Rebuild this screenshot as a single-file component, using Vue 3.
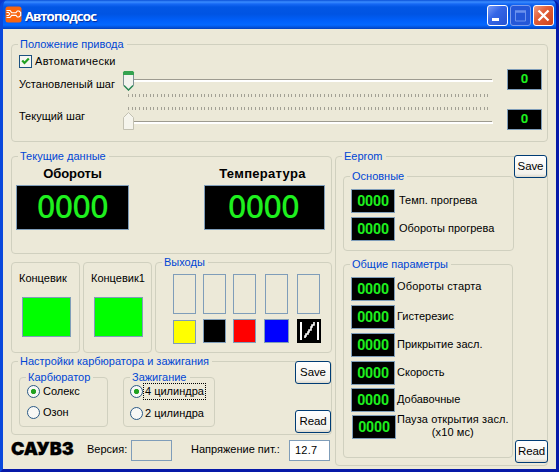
<script setup>
const ticks = Array.from({ length: 100 }, (_, i) => 13.5 + Math.round(i * 3.63))
const outputs = ['yellow', 'black', 'red', 'blue', 'coil']
const params = [
  { id: 'start', text: 'Обороты старта' },
  { id: 'hyst', text: 'Гистерезис' },
  { id: 'cover', text: 'Прикрытие засл.' },
  { id: 'speed', text: 'Скорость' },
  { id: 'extra', text: 'Добавочные' },
]
</script>

<template>
  <div class="window">
    <header class="titlebar">
      <svg class="app-icon" width="17" height="17" viewBox="0 0 17 17">
        <rect x=".5" y=".5" width="16" height="16" rx="2.5" fill="#f9650f" />
        <path d="M1.500 4.500h3.500l1.700 2.200h4.300l1.300-1.700h1.700l1.700 1.500v3l-1.700 1.500h-1.700l-1.300-1.600h-4.300L5 11.500H1.500M1.500 6.500h2l1.200 1.500-1.200 1.500h-2" fill="none" stroke="#fff" stroke-width="1.100" />
      </svg>
      <h1>Автоподсос</h1>
      <div class="controls">
        <svg width="21" height="21" viewBox="0 0 21 21">
          <defs>
            <linearGradient id="blueBtn" x1="0" y1="0" x2="1" y2="1"><stop offset="0" stop-color="#7d9ff8" /><stop offset=".4" stop-color="#3566e6" /><stop offset="1" stop-color="#2553d2" /></linearGradient>
            <linearGradient id="redBtn" x1="0" y1="0" x2="1" y2="1"><stop offset="0" stop-color="#f0a088" /><stop offset=".4" stop-color="#e2603a" /><stop offset="1" stop-color="#cc4119" /></linearGradient>
          </defs>
          <rect x=".5" y=".5" width="20" height="20" rx="2.500" fill="url(#blueBtn)" stroke="#fff" />
          <rect x="5" y="13" width="7" height="3" fill="#fff" />
        </svg>
        <svg width="21" height="21" viewBox="0 0 21 21">
          <rect x=".5" y=".5" width="20" height="20" rx="2.500" fill="#2457d8" stroke="#7c9cec" />
          <path d="M5.500 6v10h10V6M5 6.500h11" fill="none" stroke="#6c92ee" />
          <path d="M5 6.500h11" stroke="#6c92ee" stroke-width="2.500" />
        </svg>
        <svg width="21" height="21" viewBox="0 0 21 21">
          <rect x=".5" y=".5" width="20" height="20" rx="2.500" fill="url(#redBtn)" stroke="#fff" />
          <path d="M5.500 5.500l10 10M15.500 5.500l-10 10" stroke="#fff" stroke-width="2.300" />
        </svg>
      </div>
    </header>

    <main class="client">
      <section class="group drive">
        <div class="legend"><span>Положение привода</span></div>
        <div class="drive-body">
          <div class="drive-labels">
            <label class="auto">
              <svg width="13" height="13" viewBox="0 0 13 13">
                <rect x=".5" y=".5" width="12" height="12" fill="#f6f6f2" stroke="#1c5180" />
                <path d="M3.200 5.500l2.300 2.500 4.300-4.500" fill="none" stroke="#21a121" stroke-width="2.200" />
              </svg>
              <span>Автоматически</span>
            </label>
            <span class="set-step">Установленый шаг</span>
            <span class="cur-step">Текущий шаг</span>
          </div>
          <svg class="sliders" width="385" height="70" viewBox="0 0 385 70">
            <path d="M8 14.500h369M8 56.500h369" stroke="#9d9b90" />
            <path d="M8 16h370M8 58h370" stroke="#fff" stroke-width="2" />
            <g stroke="#a3a195">
              <path v-for="t in ticks" :key="t" :d="`M${t} 29v3M${t} 42v3`" />
            </g>
            <path d="M8.500 7.500h10v13l-5 5-5-5z" fill="#f3f3ee" stroke="#7e9096" />
            <path d="M8 10V7.500l1-1.500h9l1 1.500V10z" fill="#35a350" />
            <path d="M9 20.500l4.500 4.500 4.500-4.500" fill="none" stroke="#2e8b57" stroke-width="1.500" />
            <path d="M8.500 64.500h10V52.500l-5-5-5 5z" fill="#f5f4ec" stroke="#c3c1b2" />
          </svg>
          <div class="drive-values">
            <output class="lcd tiny">0</output>
            <output class="lcd tiny">0</output>
          </div>
        </div>
      </section>

      <div class="columns">
        <div class="left">
          <section class="group current">
            <div class="legend"><span>Текущие данные</span></div>
            <div class="gauges">
              <div class="gauge rpm"><b>Обороты</b><output class="lcd big">0000</output></div>
              <div class="gauge temp"><b>Температура</b><output class="lcd big">0000</output></div>
            </div>
          </section>

          <div class="io">
            <section class="group limit"><span>Концевик</span><i></i></section>
            <section class="group limit"><span>Концевик1</span><i></i></section>
            <section class="group outs">
              <div class="legend"><span>Выходы</span></div>
              <div class="out-grid">
                <div v-for="o in outputs" :key="o" class="out">
                  <i class="slot"></i>
                  <svg v-if="o === 'coil'" width="24" height="24" viewBox="0 0 24 24">
                    <rect width="24" height="24" fill="#000" />
                    <path d="M4 3v18M21 3v18" stroke="#fff" stroke-width="2" />
                    <path d="M8 19v-2h1v-2h2v-2h1v-2h2V8h1V6h2V3" fill="none" stroke="#fff" stroke-width="1.600" />
                  </svg>
                  <i v-else class="chip" :class="o"></i>
                </div>
              </div>
            </section>
          </div>

          <section class="group setup">
            <div class="legend"><span>Настройки карбюратора и зажигания</span></div>
            <div class="setup-body">
              <section class="group carb">
                <div class="legend"><span>Карбюратор</span></div>
                <label class="radio on"><i></i><span>Солекс</span></label>
                <label class="radio"><i></i><span>Озон</span></label>
              </section>
              <section class="group ign">
                <div class="legend"><span>Зажигание</span></div>
                <label class="radio on"><i></i><span class="focus">4 цилиндра</span></label>
                <label class="radio"><i></i><span>2 цилиндра</span></label>
              </section>
            </div>
            <button class="save">Save</button>
            <button class="read">Read</button>
          </section>

          <footer class="status">
            <strong>САУВЗ</strong>
            <span class="ver">Версия:</span>
            <i class="box"></i>
            <span class="volt">Напряжение пит.:</span>
            <span class="box white">12.7</span>
          </footer>
        </div>

        <section class="group eeprom">
          <div class="legend"><span>Eeprom</span></div>
          <section class="group basic">
            <div class="legend"><span>Основные</span></div>
            <div class="param"><output class="lcd">0000</output><span class="warm">Темп. прогрева</span></div>
            <div class="param"><output class="lcd">0000</output><span class="warm">Обороты прогрева</span></div>
          </section>
          <section class="group common">
            <div class="legend"><span>Общие параметры</span></div>
            <div v-for="p in params" :key="p.id" class="param" :class="p.id">
              <output class="lcd">0000</output><span>{{ p.text }}</span>
            </div>
            <div class="param pause">
              <output class="lcd">0000</output>
              <span>Пауза открытия засл.<br />(x10 мс)</span>
            </div>
          </section>
          <button class="save">Save</button>
          <button class="read">Read</button>
        </section>
      </div>
    </main>
  </div>
</template>

<style>
body { margin: 0; overflow: hidden; background: #0a3ad0; }
</style>

<style scoped>
* { box-sizing: border-box; }
.window {
  width: 559px; height: 472px; overflow: hidden;
  display: flex; flex-direction: column;
  border: solid #0a48dc; border-width: 0 3px 3px;
  border-right-color: #0619a8; border-bottom-color: #0619a8;
  border-radius: 7px 7px 0 0;
  font: 11px/13px "Liberation Sans", Arial, sans-serif;
  letter-spacing: 0; color: #000; white-space: nowrap;
}
.titlebar {
  height: 29px; flex: none; margin: 0 -3px; padding: 2px 5px 0;
  display: flex; align-items: center;
  background: linear-gradient(#0a50d8 0, #3a8cff 2px, #1668f4 4px, #0256e4 7px, #0054e3 14px, #0060fb 21px, #0468ff 25px, #0355e0 27px, #0240bd 29px);
}
.app-icon { margin-top: -2px; }
h1 {
  margin: 1px 0 0 3px; flex: 1;
  font: 600 13px/18px "Open Sans", sans-serif; letter-spacing: -.5px;
  color: #fff; text-shadow: .3px 0 0 #fff, 1px 1px 1px #06258c;
}
.controls { display: flex; gap: 2px; }
.client { flex: 1; background: #ece9d8; padding: 15px 8px 0; }
.group {
  position: relative; display: flex; flex-direction: column;
  border: 1px solid #d0d0bf; border-radius: 4px;
}
.legend { height: 15px; margin: -9px 0 -6px; padding-left: 6px; color: #0046d5; line-height: 16px; }
.legend span { display: inline-block; height: 15px; padding: 0 3px 0 2px; background: #ece9d8; }

.drive { height: 98px; width: 537px; }
.drive-body { display: flex; }
.drive-labels { width: 106px; flex: none; padding-left: 7px; display: flex; flex-direction: column; }
.auto { display: flex; gap: 3px; margin-top: 10px; letter-spacing: .3px; }
.set-step { margin-top: 10px; letter-spacing: .05px; }
.cur-step { margin-top: 19px; }
.sliders { margin-top: 20px; flex: none; margin-left: -3px; }
.drive-values { display: flex; flex-direction: column; gap: 19px; margin: 24px 0 0 7px; }

.lcd {
  display: flex; align-items: center; justify-content: center;
  width: 44px; height: 24px; flex: none;
  background: #000; border: 1px solid #7f9db9; color: #1ef01e;
  font: 700 14px/22px Roboto, sans-serif; letter-spacing: -.1px; padding-bottom: 1px;
}
.lcd.tiny { width: 35px; height: 21px; font: bold 13px/18px Roboto, sans-serif; padding-bottom: 1px; }
.lcd.big { width: 113px; height: 45px; font: 500 32px/38px "Noto Sans", sans-serif; letter-spacing: -.5px; padding: 0 0 4px; }

.columns { display: flex; gap: 3px; margin-top: 14px; }
.left { width: 321px; }
.current { height: 98px; }
.gauges { display: flex; justify-content: space-between; padding: 9px 6px 0 4px; }
.gauge { display: flex; flex-direction: column; align-items: center; }
.gauge b { font: bold 13px/16px "Liberation Sans", sans-serif; letter-spacing: -.1px; margin-bottom: 3px; }
.gauge.temp b { letter-spacing: .3px; margin-right: 4px; }
.gauge.temp .lcd { width: 121px; padding-right: 2px; }

.io { display: flex; gap: 3px; margin-top: 8px; }
.limit { width: 69px; height: 91px; padding: 9px 0 0 7px; }
.limit i { width: 49px; height: 40px; margin: 12px 0 0 3px; background: #0f0; border: 1px solid #7f9db9; }
.outs { width: 177px; height: 91px; }
.out-grid { display: grid; grid-template-columns: 30px 30px 32px 32px 24px; padding: 11px 0 0 17px; }
.out { display: flex; flex-direction: column; gap: 5px; }
.slot { width: 23px; height: 40px; border: 1px solid #7f9db9; }
.chip { width: 23px; height: 24px; border: 1px solid #7f9db9; }
.yellow { background: #ff0; margin-top: 1px; }
.black { background: #000; }
.red { background: #f00; }
.blue { background: #00f; width: 25px; margin-left: -1px; }

.setup { height: 74px; margin-top: 8px; }
.setup-body { display: flex; gap: 15px; padding: 15px 0 0 7px; }
.carb { width: 89px; height: 50px; }
.ign { width: 92px; height: 50px; }
.radio { display: flex; align-items: center; gap: 2px; height: 15px; margin: 6px 0 0 7px; }
.radio + .radio { margin-top: 6px; }
.ign .radio + .radio { margin-top: 7px; }
.radio i { width: 13px; height: 13px; border: 1px solid #2b5a86; border-radius: 50%; background: #f8f8f5; }
.radio.on i { background: radial-gradient(circle, #21a121 0 2.200px, #f8f8f5 3px); }
.radio span { padding: 1px; }
.ign .radio { gap: 1px; margin-left: 6px; }
.focus { outline: 1px dotted #000; }
button {
  position: absolute; height: 23px; padding: 0; border: 1px solid #003c74; border-radius: 3px;
  background: linear-gradient(#fff, #f3f2ec 85%, #dcd8cc); color: #000;
  font: 11.500px/19px "Liberation Sans", sans-serif; letter-spacing: -.1px;
}
.setup button { left: 283px; width: 36px; }
.setup .save { top: -1px; }
.setup .read { top: 48px; }
.status { display: flex; align-items: center; height: 32px; }
.status > span:not(.box) { margin-top: -3px; }
strong { width: 76px; margin-top: -4px; font: 900 18px/20px Inter, sans-serif; letter-spacing: -.1px; -webkit-text-stroke: .3px #000; }
.ver { width: 44px; }
.box { width: 41px; height: 21px; border: 1px solid #7f9db9; margin-top: -2px; }
.volt { width: 98px; margin-left: 19px; }
.white { background: #fff; padding: 3px 5px; letter-spacing: .2px; }

.eeprom { width: 213px; height: 310px; padding-left: 7px; }
.eeprom > .legend { margin-left: -7px; }
.basic { width: 171px; height: 75px; margin-top: 19px; }
.common { width: 170px; height: 194px; margin-top: 13px; }
.param { display: flex; align-items: center; gap: 2px; margin: 4px 0 0 7px; }
.param > span { margin-top: -2px; }
.legend + .param { margin-top: 12px; }
.param .warm { margin-left: 2px; }
.param.start > span { margin-top: -5px; letter-spacing: .15px; }
.extra, .pause { margin-top: 3px; }
.pause { margin-left: 8px; gap: 1px; }
.pause > span { text-align: center; letter-spacing: .1px; }
.eeprom > .save { left: 178px; top: -2px; width: 33px; }
.eeprom > .read { left: 179px; top: 283px; width: 33px; }
</style>
